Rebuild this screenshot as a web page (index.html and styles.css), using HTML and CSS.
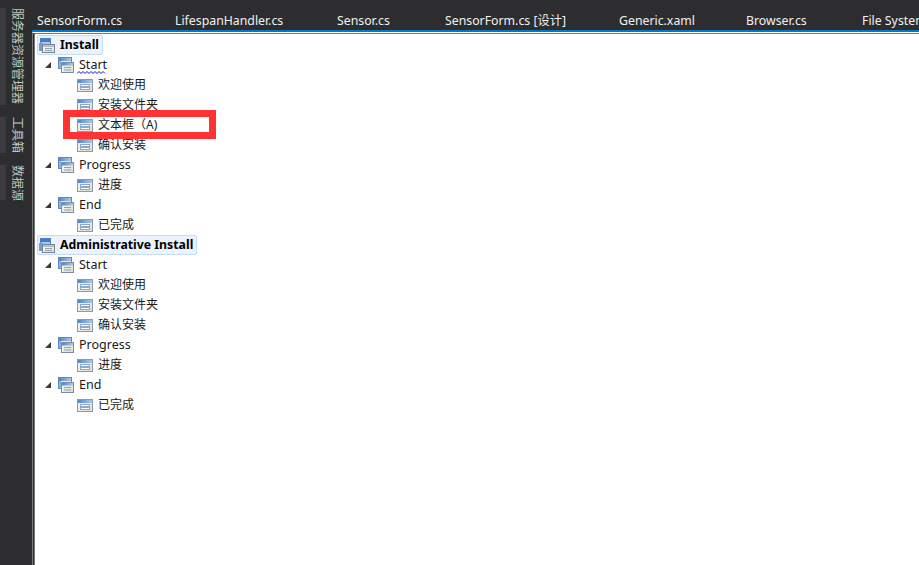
FILE: index.html
```html
<!DOCTYPE html>
<html lang="zh">
<head>
<meta charset="utf-8">
<title>Installer UI</title>
<link rel="stylesheet" href="styles.css">
</head>
<body>
<svg class="defs" width="0" height="0" aria-hidden="true">
  <defs>
    <linearGradient id="bar" x1="0" y1="0" x2="1" y2="0">
      <stop offset="0" stop-color="#4f86cc"/>
      <stop offset="1" stop-color="#a9c8ea"/>
    </linearGradient>
    <linearGradient id="body" x1="0" y1="0" x2="1" y2="1">
      <stop offset="0" stop-color="#fbfbf6"/>
      <stop offset="1" stop-color="#dcdccc"/>
    </linearGradient>
    <symbol id="win" viewBox="0 0 16 13">
      <rect x="0.5" y="0.5" width="15" height="12" fill="url(#body)" stroke="#8b9aae"/>
      <rect x="1" y="1" width="14" height="3" fill="url(#bar)"/>
      <rect x="3.5" y="5.5" width="9" height="2" fill="#fff" stroke="#8ea8c8"/>
      <rect x="3.5" y="8.5" width="9" height="2" fill="#fff" stroke="#8ea8c8"/>
    </symbol>
    <symbol id="group" viewBox="0 0 16 16">
      <rect x="0.5" y="0.5" width="13" height="11" fill="#dbe8f6" stroke="#5f88bd"/>
      <rect x="1" y="1" width="12" height="3" fill="url(#bar)"/>
      <rect x="1" y="4" width="2" height="7" fill="#8fb2de"/>
      <rect x="3.5" y="5.5" width="12" height="10" fill="url(#body)" stroke="#7f8ea3"/>
      <rect x="4" y="6" width="11" height="2.5" fill="url(#bar)"/>
      <rect x="6" y="10" width="7" height="1" fill="#8ea2bb"/>
      <rect x="6" y="12.5" width="7" height="1" fill="#8ea2bb"/>
    </symbol>
    <symbol id="root" viewBox="0 0 16 15">
      <rect x="1.5" y="0.5" width="10" height="10" fill="#a8c8ee" stroke="#4c82c8"/>
      <rect x="2" y="1" width="9" height="3" fill="#3f7cc8"/>
      <rect x="0" y="5" width="4" height="8" fill="#6e9edc"/>
      <rect x="3.5" y="6.5" width="12" height="8" fill="url(#body)" stroke="#7c8794"/>
      <rect x="4" y="7" width="11" height="2" fill="#b6c0ca"/>
      <rect x="6" y="10" width="7" height="1" fill="#8ea2bb"/>
      <rect x="6" y="12" width="7" height="1" fill="#8ea2bb"/>
    </symbol>
  </defs>
</svg>

<div class="app">
  <aside class="rail">
    <div class="rail-item rail-server"><span class="rail-tab"></span><span class="rail-label">服务器资源管理器</span></div>
    <div class="rail-item rail-tools"><span class="rail-tab"></span><span class="rail-label">工具箱</span></div>
    <div class="rail-item rail-data"><span class="rail-tab"></span><span class="rail-label">数据源</span></div>
  </aside>

  <main class="main">
    <nav class="tabs">
      <span class="tab t1">SensorForm.cs</span>
      <span class="tab t2">LifespanHandler.cs</span>
      <span class="tab t3">Sensor.cs</span>
      <span class="tab t4">SensorForm.cs [设计]</span>
      <span class="tab t5">Generic.xaml</span>
      <span class="tab t6">Browser.cs</span>
      <span class="tab t7">File System</span>
    </nav>
    <div class="accent"></div>
    <section class="canvas">
      <div class="tree">
        <div class="row lv0"><span class="root-pill"><svg class="ic-root"><use href="#root"/></svg><b>Install</b></span></div>
        <div class="row lv1"><svg class="twist" viewBox="0 0 6 6"><polygon points="6,0 6,6 0,6"/></svg><svg class="ic-group"><use href="#group"/></svg><span class="txt squiggle">Start<svg class="wave" viewBox="0 0 29 3"><polyline points="0,2.5 2,0.5 4,2.5 6,0.5 8,2.5 10,0.5 12,2.5 14,0.5 16,2.5 18,0.5 20,2.5 22,0.5 24,2.5 26,0.5 28,2.5"/></svg></span></div>
        <div class="row lv2"><svg class="ic-win"><use href="#win"/></svg><span class="txt zh">欢迎使用</span></div>
        <div class="row lv2"><svg class="ic-win"><use href="#win"/></svg><span class="txt zh">安装文件夹</span></div>
        <div class="row lv2 marked"><svg class="ic-win"><use href="#win"/></svg><span class="txt zh">文本框（A)</span></div>
        <div class="row lv2"><svg class="ic-win"><use href="#win"/></svg><span class="txt zh">确认安装</span></div>
        <div class="row lv1"><svg class="twist" viewBox="0 0 6 6"><polygon points="6,0 6,6 0,6"/></svg><svg class="ic-group"><use href="#group"/></svg><span class="txt">Progress</span></div>
        <div class="row lv2"><svg class="ic-win"><use href="#win"/></svg><span class="txt zh">进度</span></div>
        <div class="row lv1"><svg class="twist" viewBox="0 0 6 6"><polygon points="6,0 6,6 0,6"/></svg><svg class="ic-group"><use href="#group"/></svg><span class="txt">End</span></div>
        <div class="row lv2"><svg class="ic-win"><use href="#win"/></svg><span class="txt zh">已完成</span></div>

        <div class="row lv0"><span class="root-pill"><svg class="ic-root"><use href="#root"/></svg><b>Administrative Install</b></span></div>
        <div class="row lv1"><svg class="twist" viewBox="0 0 6 6"><polygon points="6,0 6,6 0,6"/></svg><svg class="ic-group"><use href="#group"/></svg><span class="txt">Start</span></div>
        <div class="row lv2"><svg class="ic-win"><use href="#win"/></svg><span class="txt zh">欢迎使用</span></div>
        <div class="row lv2"><svg class="ic-win"><use href="#win"/></svg><span class="txt zh">安装文件夹</span></div>
        <div class="row lv2"><svg class="ic-win"><use href="#win"/></svg><span class="txt zh">确认安装</span></div>
        <div class="row lv1"><svg class="twist" viewBox="0 0 6 6"><polygon points="6,0 6,6 0,6"/></svg><svg class="ic-group"><use href="#group"/></svg><span class="txt">Progress</span></div>
        <div class="row lv2"><svg class="ic-win"><use href="#win"/></svg><span class="txt zh">进度</span></div>
        <div class="row lv1"><svg class="twist" viewBox="0 0 6 6"><polygon points="6,0 6,6 0,6"/></svg><svg class="ic-group"><use href="#group"/></svg><span class="txt">End</span></div>
        <div class="row lv2"><svg class="ic-win"><use href="#win"/></svg><span class="txt zh">已完成</span></div>
      </div>
    </section>
  </main>
</div>
</body>
</html>
```

FILE: styles.css
```css
*, *::before { box-sizing: border-box; }

html, body {
  margin: 0;
  height: 100%;
  overflow: hidden;
  background: #2d2d30;
}

body {
  font-family: "Noto Sans", "Noto Sans CJK SC", sans-serif;
  font-size: 12.5px;
}

.defs { position: absolute; }

.app {
  display: flex;
  width: 919px;
  height: 565px;
}

/* Left tool rail */
.rail {
  flex: 0 0 32px;
  display: flex;
  flex-direction: column;
  gap: 12px;
  padding-top: 8px;
  background: #2d2d30;
}

.rail-item { display: flex; }
.rail-server { height: 97px; }
.rail-tools { height: 36px; }
.rail-data { height: 35px; }

.rail-tab {
  flex: 0 0 6px;
  background: #3c3c40;
}

.rail-label {
  margin-left: 4px;
  writing-mode: vertical-rl;
  text-orientation: sideways;
  color: #bcc8bc;
  font-size: 12px;
  line-height: 14px;
  white-space: nowrap;
}

/* Main column */
.main {
  flex: 1;
  display: flex;
  flex-direction: column;
  min-width: 0;
}

.tabs {
  flex: 0 0 30px;
  display: flex;
  overflow: hidden;
  padding: 12px 0 0 5px;
  color: #f1f1f1;
  font-size: 12.3px;
  line-height: 18px;
  white-space: nowrap;
}

.tab { flex: none; }
.t1 { width: 138px; }
.t2 { width: 162px; }
.t3 { width: 108px; }
.t4 { width: 174px; }
.t5 { width: 127px; }
.t6 { width: 116px; }

.accent {
  flex: 0 0 2px;
  background: #007acc;
}

.canvas {
  flex: 1;
  background: #fff;
  border-top: 1px solid #fff;
  border-left: 1px solid #777;
  box-shadow: inset 1px 0 0 #2d2d30, inset 2px 0 0 #777;
  padding-top: 1px;
}

.canvas::before {
  content: "";
  display: block;
  height: 1px;
  margin: -1px 0 0 2px;
  background: #777;
}

/* Tree */
.tree {
  display: flex;
  flex-direction: column;
  padding-top: 1px;
  color: #1a1a1a;
}

.row {
  display: flex;
  align-items: center;
  height: 20px;
  white-space: nowrap;
}

.lv0 { padding-left: 4px; }
.lv1 { padding-left: 12px; }
.lv2 { padding-left: 44px; }

.txt { margin-top: -2px; }
.zh { font-size: 12px; }

.root-pill {
  display: flex;
  align-items: center;
  height: 20px;
  padding: 0 3px 0 1px;
  background: #ecf3fc;
  border: 1px solid #c6dcf4;
  border-radius: 2px;
  color: #000;
}

.root-pill b {
  margin: -2px 0 0 5px;
  font-weight: 700;
  font-size: 12.3px;
}

.ic-root { width: 16px; height: 15px; flex: none; }
.ic-group { width: 16px; height: 16px; flex: none; margin-left: 7px; margin-right: 5px; }
.ic-win { width: 16px; height: 13px; flex: none; margin-right: 5px; }

.twist {
  width: 6px;
  height: 6px;
  flex: none;
  fill: #3a3a3a;
}

/* Spell-check squiggle lying under the word */
.squiggle { position: relative; }

.wave {
  position: absolute;
  left: -2px;
  top: 15px;
  width: 29px;
  height: 3px;
  fill: none;
  stroke: #1010e0;
  stroke-width: 1;
}

/* Red annotation frame, drawn behind its row's content but over the neighbours */
.marked {
  position: relative;
  z-index: 1;
}

.marked::before {
  content: "";
  position: absolute;
  z-index: -1;
  left: 30px;
  top: -5px;
  width: 153px;
  height: 29px;
  background: #fff;
  border: 7px solid #ff3333;
}
```
